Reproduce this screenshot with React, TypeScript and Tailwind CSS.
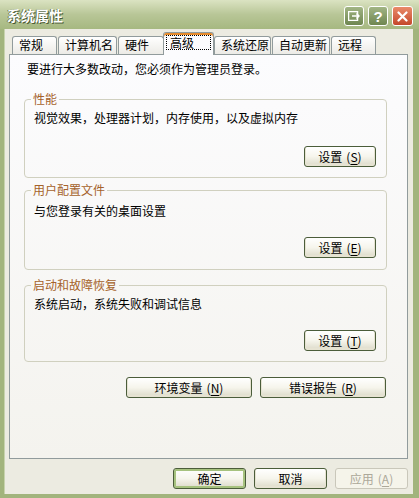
import React from "react";

type BtnProps = {
  children: React.ReactNode;
  className?: string;
  isDefault?: boolean;
  disabled?: boolean;
};

function XpButton({ children, className = "", isDefault, disabled }: BtnProps) {
  if (disabled) {
    return (
      <div
        className={`h-[21px] flex items-center justify-center rounded-[3px] border border-[#c9c7ba] bg-[#f5f4ea] text-[#aca899] ${className}`}
      >
        {children}
      </div>
    );
  }
  return (
    <div
      className={`h-[21px] flex items-center justify-center rounded-[3px] border border-[#4b5d3a] bg-gradient-to-b from-[#ffffff] via-[#f6f5ec] to-[#dcdac8] text-black ${
        isDefault ? "shadow-[inset_0_0_0_2px_#a6c27e]" : "shadow-[inset_0_-1px_0_1px_#e6e3d2]"
      } ${className}`}
    >
      {children}
    </div>
  );
}

function Key({ k }: { k: string }) {
  return (
    <span className="ml-[4px]">
      (<span className="underline underline-offset-2">{k}</span>)
    </span>
  );
}

function Tab({ label, w, active }: { label: string; w: string; active?: boolean }) {
  if (active) {
    return (
      <div
        className={`${w} h-[23px] mb-[-1px] relative z-10 bg-[#fcfcfe] border border-b-0 border-[#919b9c] rounded-t-[3px] shadow-[inset_0_2px_0_0_#e68b2c] pt-[1px] px-[2px]`}
      >
        <div className="mt-[1px] h-[15px] border border-dotted border-black flex items-center pl-[3px] leading-[13px]">
          {label}
        </div>
      </div>
    );
  }
  return (
    <div
      className={`${w} h-[18px] border border-b-0 border-[#919b9c] rounded-t-[3px] bg-gradient-to-b from-[#ffffff] to-[#ecebe6] pl-[6px] leading-[16px] mr-[1px]`}
    >
      {label}
    </div>
  );
}

function Group({
  title,
  text,
  btn,
  mt,
  pt,
  bmt,
  pb,
}: {
  title: string;
  text: string;
  btn: React.ReactNode;
  mt: string;
  pt: string;
  bmt: string;
  pb: string;
}) {
  return (
    <fieldset className={`${mt} w-[363px] border border-[#d0d0bf] rounded-[4px] px-0`}>
      <legend className="ml-[6px] px-[2px] text-[#a5622a] leading-[14px]">{title}</legend>
      <div className={`${pt} ${pb} pl-[9px] pr-[10px]`}>
        <div className="leading-[14px]">{text}</div>
        <div className={`${bmt} flex justify-end`}>
          <XpButton className="w-[72px]">{btn}</XpButton>
        </div>
      </div>
    </fieldset>
  );
}

export default function App() {
  return (
    <div className="w-[419px] h-[498px] flex flex-col bg-[#a2b47d] text-[12px] font-['Noto_Sans_CJK_SC',sans-serif] text-black overflow-hidden">
      {/* Title bar */}
      <div className="h-[29px] shrink-0 flex items-center justify-between pl-[7px] pr-[6px] bg-gradient-to-b from-[#dbe3c2] via-[#b8c697] to-[#a6b881]">
        <div className="text-[14px] font-bold text-white leading-[16px] [text-shadow:1px_1px_0_#4a5a34,-1px_0_0_#6c7d52]">
          系统属性
        </div>
        <div className="flex items-center gap-[4px] mt-[3px]">
          <div className="w-[20px] h-[20px] rounded-[3px] border border-white bg-gradient-to-b from-[#a2b585] to-[#6f8650] flex items-center justify-center">
            <svg width="12" height="10" viewBox="0 0 12 10">
              <rect x="0.5" y="0.5" width="9" height="9" fill="none" stroke="white" strokeWidth="1.5" />
              <path d="M4 5 H11 M8.5 2.5 L11 5 L8.5 7.5" fill="none" stroke="white" strokeWidth="1.5" />
            </svg>
          </div>
          <div className="w-[20px] h-[20px] rounded-[3px] border border-white bg-gradient-to-b from-[#a2b585] to-[#6f8650] flex items-center justify-center text-white font-bold text-[15px] leading-none font-['Liberation_Sans',sans-serif]">
            ?
          </div>
          <div className="w-[21px] h-[20px] rounded-[3px] border border-white bg-gradient-to-b from-[#e98a6a] to-[#c4472a] flex items-center justify-center">
            <svg width="11" height="11" viewBox="0 0 11 11">
              <path d="M1.5 1.5 L9.5 9.5 M9.5 1.5 L1.5 9.5" stroke="white" strokeWidth="2.2" strokeLinecap="round" />
            </svg>
          </div>
        </div>
      </div>

      {/* Client area */}
      <div className="flex-1 ml-[4px] mr-[6px] mb-[4px] bg-[#ecebe1] flex flex-col pt-[3px] shadow-[inset_1px_0_0_#c7d3ad]">
        {/* Tabs */}
        <div className="h-[22px] flex items-end pl-[8px]">
          <Tab label="常规" w="w-[45px]" />
          <Tab label="计算机名" w="w-[59px]" />
          <Tab label="硬件" w="w-[46px]" />
          <div className="ml-[-2px] mr-[-2px] flex items-end relative z-10">
            <Tab label="高级" w="w-[51px]" active />
          </div>
          <div className="w-[2px]" />
          <Tab label="系统还原" w="w-[57px]" />
          <Tab label="自动更新" w="w-[58px]" />
          <Tab label="远程" w="w-[45px]" />
        </div>

        {/* Tab page */}
        <div className="ml-[5px] w-[399px] h-[405px] border border-[#919b9c] bg-gradient-to-b from-[#fcfcfe] to-[#f4f3ee] pl-[14px] pt-[7px]">
          <div className="pl-[3px] leading-[14px]">要进行大多数改动，您必须作为管理员登录。</div>

          <Group
            title="性能"
            text="视觉效果，处理器计划，内存使用，以及虚拟内存"
            btn={<>设置<Key k="S" /></>}
            mt="mt-[16px]"
            pt="pt-[5px]"
            bmt="mt-[21px]"
            pb="pb-[10px]"
          />
          <Group
            title="用户配置文件"
            text="与您登录有关的桌面设置"
            btn={<>设置<Key k="E" /></>}
            mt="mt-[5px]"
            pt="pt-[7px]"
            bmt="mt-[19px]"
            pb="pb-[11px]"
          />
          <Group
            title="启动和故障恢复"
            text="系统启动，系统失败和调试信息"
            btn={<>设置<Key k="T" /></>}
            mt="mt-[8px]"
            pt="pt-[5px]"
            bmt="mt-[19px]"
            pb="pb-[10px]"
          />

          <div className="w-[362px] mt-[15px] flex justify-end gap-[8px]">
            <XpButton className="w-[126px]">
              环境变量<Key k="N" />
            </XpButton>
            <XpButton className="w-[126px]">
              错误报告<Key k="R" />
            </XpButton>
          </div>
        </div>

        {/* Footer buttons */}
        <div className="mt-[9px] flex justify-end gap-[8px] pr-[5px]">
          <XpButton className="w-[73px]" isDefault>
            确定
          </XpButton>
          <XpButton className="w-[73px]">取消</XpButton>
          <XpButton className="w-[73px]" disabled>
            应用<Key k="A" />
          </XpButton>
        </div>
      </div>
    </div>
  );
}
